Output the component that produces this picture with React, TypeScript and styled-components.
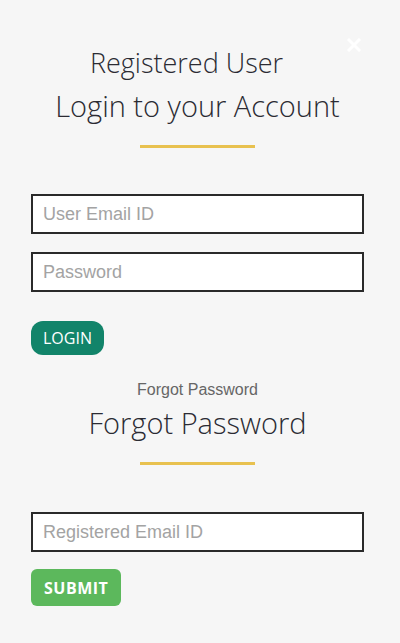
import { ReactElement } from 'react';
import styled, { createGlobalStyle } from 'styled-components';

const COLORS = {
	background: '#f6f6f6',
	heading: '#2b2b33',
	accent: '#e8c14f',
	border: '#2a2a2a',
	placeholder: '#a3a3a3',
	login: '#12846a',
	submit: '#5cb85c',
};

const GlobalStyle = createGlobalStyle`
	html, body {
		margin: 0;
		padding: 0;
		background: ${COLORS.background};
	}
	body {
		font-family: 'Open Sans', 'Liberation Sans', sans-serif;
	}
`;

export default function App(): ReactElement {
	return (
		<>
			<GlobalStyle />
			<Modal>
				<CloseButton aria-label="close">
					<svg width="14" height="14" viewBox="0 0 14 14">
						<path
							d="M2 2 L12 12 M12 2 L2 12"
							stroke="#fff"
							strokeWidth={3}
							strokeLinecap="square"
						/>
					</svg>
				</CloseButton>

				<SubTitle>Registered User</SubTitle>
				<Title>Login to your Account</Title>
				<Divider />

				<Form>
					<Field placeholder="User Email ID" />
					<Field placeholder="Password" type="password" />
					<LoginButton>LOGIN</LoginButton>
				</Form>

				<SmallLabel>Forgot Password</SmallLabel>
				<Title>Forgot Password</Title>
				<Divider />

				<Form $top={47}>
					<Field placeholder="Registered Email ID" />
					<SubmitButton>SUBMIT</SubmitButton>
				</Form>
			</Modal>
		</>
	);
}

const Modal = styled.div`
	position: relative;
	width: 400px;
	height: 643px;
	box-sizing: border-box;
	padding: 43px 36px 0 31px;
	display: flex;
	flex-direction: column;
	background: ${COLORS.background};
`;

// sits over the corner of the modal
const CloseButton = styled.button`
	position: absolute;
	top: 38px;
	right: 39px;
	border: none;
	padding: 0;
	background: transparent;
	display: flex;
	cursor: pointer;
`;

const SubTitle = styled.h3`
	margin: 0;
	padding-right: 22px;
	text-align: center;
	font-family: 'Open Sans', sans-serif;
	font-weight: 300;
	font-size: 27px;
	line-height: 40px;
	color: ${COLORS.heading};
`;

const Title = styled.h2<{ $top?: number }>`
	margin: ${({ $top }) => $top ?? 1}px 0 0;
	text-align: center;
	font-family: 'Open Sans', sans-serif;
	font-weight: 300;
	font-size: 29px;
	line-height: 44px;
	color: ${COLORS.heading};
`;

const Divider = styled.div`
	align-self: center;
	width: 115px;
	height: 3px;
	margin-top: 17px;
	background: ${COLORS.accent};
`;

const Form = styled.div<{ $top?: number }>`
	display: flex;
	flex-direction: column;
	align-items: flex-start;
	margin-top: ${({ $top }) => $top ?? 46}px;
`;

const Field = styled.input`
	box-sizing: border-box;
	width: 333px;
	height: 40px;
	margin: 0 0 18px;
	padding: 0 10px;
	border: 2px solid ${COLORS.border};
	border-radius: 0;
	background: #fff;
	font-family: 'Liberation Sans', Arial, sans-serif;
	font-size: 18px;
	color: #333;
	outline: none;

	&::placeholder {
		color: ${COLORS.placeholder};
	}
`;

const LoginButton = styled.button`
	margin-top: 11px;
	height: 34px;
	padding: 0 12px;
	border: none;
	border-radius: 12px;
	background: ${COLORS.login};
	color: #fff;
	font-family: 'Open Sans', sans-serif;
	font-size: 16px;
	cursor: pointer;
`;

const SmallLabel = styled.div`
	margin-top: 25px;
	text-align: center;
	font-family: 'Liberation Sans', Arial, sans-serif;
	font-size: 16px;
	line-height: 20px;
	color: #666;
`;

const SubmitButton = styled.button`
	margin-top: -1px;
	height: 37px;
	padding: 0 13px;
	border: none;
	border-radius: 6px;
	background: ${COLORS.submit};
	color: #fff;
	font-family: 'Open Sans', sans-serif;
	font-weight: 700;
	font-size: 16px;
	letter-spacing: 0.5px;
	cursor: pointer;
`;
